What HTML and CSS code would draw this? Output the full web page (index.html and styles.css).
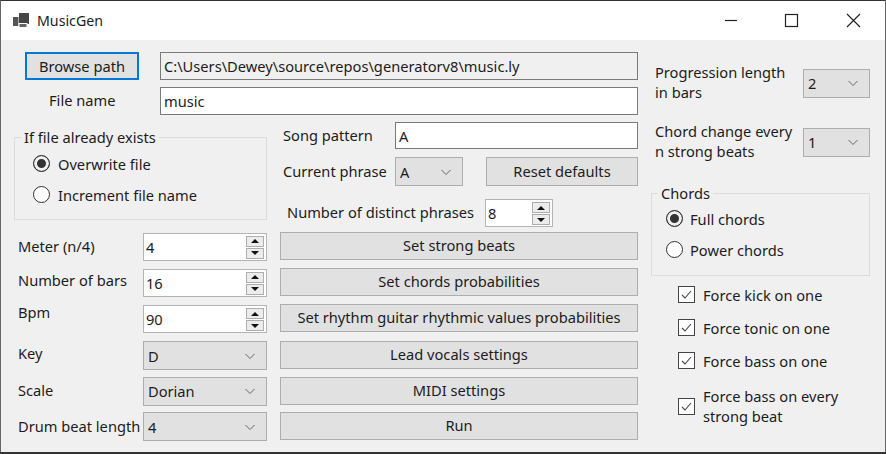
FILE: index.html
```html
<!DOCTYPE html>
<html lang="en">

<head>
    <meta charset="UTF-8">
    <title>MusicGen</title>
    <link rel="stylesheet" href="styles.css">
</head>

<body>
    <div class="window">
        <div class="titlebar">
            <svg class="app-icon" width="18" height="18" viewBox="0 0 18 18">
                <rect x="7" y="1" width="10" height="11" fill="#444"/>
                <rect x="1" y="5" width="5.5" height="9" fill="#555"/>
                <rect x="7" y="11.5" width="8" height="4" fill="#666" stroke="#fff" stroke-width="1"/>
            </svg>
            <span class="app-title">MusicGen</span>
            <div class="caption">
                <svg class="cap-btn" width="60" height="40" viewBox="0 0 60 40"><path d="M20 20.5H32" stroke="#222" stroke-width="1.2"/></svg>
                <svg class="cap-btn" width="60" height="40" viewBox="0 0 60 40"><rect x="20.5" y="14.5" width="12" height="12" fill="none" stroke="#222" stroke-width="1.2"/></svg>
                <svg class="cap-btn" width="60" height="40" viewBox="0 0 60 40"><path d="M22 14L35 27M35 14L22 27" stroke="#222" stroke-width="1.2"/></svg>
            </div>
        </div>

        <div class="content">
            <div class="main">
                <div class="path-row">
                    <div class="btn btn-browse">Browse path</div>
                    <div class="field field-readonly">C:\Users\Dewey\source\repos\generatorv8\music.ly</div>
                </div>
                <div class="path-row name-row">
                    <div class="label label-name">File name</div>
                    <div class="field">music</div>
                </div>

                <div class="upper">
                    <div class="group group-exists">
                        <div class="legend">If file already exists</div>
                        <div class="radio"><span class="radio-dot checked"></span>Overwrite file</div>
                        <div class="radio"><span class="radio-dot"></span>Increment file name</div>
                    </div>
                    <div class="phrase">
                        <div class="phrase-row">
                            <div class="label phrase-label">Song pattern</div>
                            <div class="field pattern-field">A</div>
                        </div>
                        <div class="phrase-row current-row">
                            <div class="label phrase-label">Current phrase</div>
                            <div class="select select-phrase">A
                                <svg class="chev" width="12" height="8" viewBox="0 0 12 8"><path d="M1.5 2L6 6.5L10.5 2" fill="none" stroke="#666" stroke-width="1"/></svg>
                            </div>
                            <div class="btn btn-reset">Reset defaults</div>
                        </div>
                        <div class="phrase-row distinct-row">
                            <div class="label distinct-label">Number of distinct phrases</div>
                            <div class="spin spin-small">8
                                <div class="spin-btns">
                                    <span class="arrow"><svg width="8" height="4" viewBox="0 0 8 4"><path d="M4 0L8 4H0Z" fill="#111"/></svg></span>
                                    <span class="arrow"><svg width="8" height="4" viewBox="0 0 8 4"><path d="M0 0H8L4 4Z" fill="#111"/></svg></span>
                                </div>
                            </div>
                        </div>
                    </div>
                </div>

                <div class="lower">
                    <div class="label">Meter (n/4)</div>
                    <div class="spin">4
                        <div class="spin-btns">
                            <span class="arrow"><svg width="8" height="4" viewBox="0 0 8 4"><path d="M4 0L8 4H0Z" fill="#111"/></svg></span>
                            <span class="arrow"><svg width="8" height="4" viewBox="0 0 8 4"><path d="M0 0H8L4 4Z" fill="#111"/></svg></span>
                        </div>
                    </div>
                    <div class="btn">Set strong beats</div>

                    <div class="label label-raised">Number of bars</div>
                    <div class="spin">16
                        <div class="spin-btns">
                            <span class="arrow"><svg width="8" height="4" viewBox="0 0 8 4"><path d="M4 0L8 4H0Z" fill="#111"/></svg></span>
                            <span class="arrow"><svg width="8" height="4" viewBox="0 0 8 4"><path d="M0 0H8L4 4Z" fill="#111"/></svg></span>
                        </div>
                    </div>
                    <div class="btn">Set chords probabilities</div>

                    <div class="label label-bpm">Bpm</div>
                    <div class="spin">90
                        <div class="spin-btns">
                            <span class="arrow"><svg width="8" height="4" viewBox="0 0 8 4"><path d="M4 0L8 4H0Z" fill="#111"/></svg></span>
                            <span class="arrow"><svg width="8" height="4" viewBox="0 0 8 4"><path d="M0 0H8L4 4Z" fill="#111"/></svg></span>
                        </div>
                    </div>
                    <div class="btn">Set rhythm guitar rhythmic values probabilities</div>

                    <div class="label label-raised">Key</div>
                    <div class="select">D
                        <svg class="chev" width="12" height="8" viewBox="0 0 12 8"><path d="M1.5 2L6 6.5L10.5 2" fill="none" stroke="#666" stroke-width="1"/></svg>
                    </div>
                    <div class="btn">Lead vocals settings</div>

                    <div class="label">Scale</div>
                    <div class="select">Dorian
                        <svg class="chev" width="12" height="8" viewBox="0 0 12 8"><path d="M1.5 2L6 6.5L10.5 2" fill="none" stroke="#666" stroke-width="1"/></svg>
                    </div>
                    <div class="btn">MIDI settings</div>

                    <div class="label">Drum beat length</div>
                    <div class="select">4
                        <svg class="chev" width="12" height="8" viewBox="0 0 12 8"><path d="M1.5 2L6 6.5L10.5 2" fill="none" stroke="#666" stroke-width="1"/></svg>
                    </div>
                    <div class="btn">Run</div>
                </div>
            </div>

            <div class="side">
                <div class="side-row">
                    <div class="label side-label">Progression length<br>in bars</div>
                    <div class="select select-side">2
                        <svg class="chev" width="12" height="8" viewBox="0 0 12 8"><path d="M1.5 2L6 6.5L10.5 2" fill="none" stroke="#666" stroke-width="1"/></svg>
                    </div>
                </div>
                <div class="side-row change-row">
                    <div class="label side-label">Chord change every<br>n strong beats</div>
                    <div class="select select-side">1
                        <svg class="chev" width="12" height="8" viewBox="0 0 12 8"><path d="M1.5 2L6 6.5L10.5 2" fill="none" stroke="#666" stroke-width="1"/></svg>
                    </div>
                </div>

                <div class="group group-chords">
                    <div class="legend">Chords</div>
                    <div class="radio"><span class="radio-dot checked"></span>Full chords</div>
                    <div class="radio"><span class="radio-dot"></span>Power chords</div>
                </div>

                <div class="checks">
                    <div class="check"><svg class="box" width="17" height="17" viewBox="0 0 17 17"><rect x="0.5" y="0.5" width="16" height="16" fill="#fff" stroke="#444"/><path d="M4 9L7 12L13 5" fill="none" stroke="#444" stroke-width="1.1"/></svg>Force kick on one</div>
                    <div class="check"><svg class="box" width="17" height="17" viewBox="0 0 17 17"><rect x="0.5" y="0.5" width="16" height="16" fill="#fff" stroke="#444"/><path d="M4 9L7 12L13 5" fill="none" stroke="#444" stroke-width="1.1"/></svg>Force tonic on one</div>
                    <div class="check"><svg class="box" width="17" height="17" viewBox="0 0 17 17"><rect x="0.5" y="0.5" width="16" height="16" fill="#fff" stroke="#444"/><path d="M4 9L7 12L13 5" fill="none" stroke="#444" stroke-width="1.1"/></svg>Force bass on one</div>
                    <div class="check check-tall"><svg class="box" width="17" height="17" viewBox="0 0 17 17"><rect x="0.5" y="0.5" width="16" height="16" fill="#fff" stroke="#444"/><path d="M4 9L7 12L13 5" fill="none" stroke="#444" stroke-width="1.1"/></svg><span>Force bass on every<br>strong beat</span></div>
                </div>
            </div>
        </div>
    </div>
</body>

</html>
```
FILE: styles.css
```css
html,
body {
    margin: 0;
    padding: 0;
    overflow: hidden;
}

body {
    font-family: "Noto Sans", "Open Sans", sans-serif;
    font-size: 14.65px;
    color: #1c1c1c;
    background-color: #333;
}

.window {
    box-sizing: border-box;
    width: 886px;
    height: 452px;
    border-top: 1px solid #333;
    border-left: 1px solid #666;
    border-right: 1px solid #666;
    background-color: #f0f0f0;
}

.titlebar {
    display: flex;
    align-items: center;
    height: 39px;
    background-color: #fff;
}

.app-icon {
    margin-left: 11px;
}

.app-title {
    margin-left: 7px;
    font-size: 14.2px;
}

.caption {
    display: flex;
    margin-left: auto;
    margin-right: 0;
}

.cap-btn {
    display: block;
    margin-top: -1px;
}

.content {
    display: flex;
    padding-top: 12px;
    padding-left: 13px;
}

.main {
    width: 624px;
}

.path-row {
    display: flex;
    align-items: center;
    height: 28px;
}

.name-row {
    margin-top: 7px;
}

.label {
    padding-bottom: 2px;
    white-space: nowrap;
    line-height: 20px;
}

.label-name {
    width: 146px;
    padding-left: 35px;
    box-sizing: border-box;
}

.btn {
    display: flex;
    align-items: center;
    justify-content: center;
    box-sizing: border-box;
    height: 28px;
    padding-bottom: 2px;
    background-color: #e1e1e1;
    border: 1px solid #adadad;
    white-space: nowrap;
}

.btn-browse {
    width: 114px;
    margin-left: 11px;
    margin-right: 21px;
    padding-bottom: 0;
    border: 2px solid #0078d7;
}

.field {
    display: flex;
    align-items: center;
    box-sizing: border-box;
    flex: 1;
    height: 28px;
    padding-left: 3px;
    background-color: #fff;
    border: 1px solid #7a7a7a;
}

.field-readonly {
    background-color: #f0f0f0;
}

.upper {
    display: flex;
    margin-top: 7px;
}

.group {
    position: relative;
    box-sizing: border-box;
    border: 1px solid #dcdcdc;
}

.legend {
    position: absolute;
    top: -11px;
    left: 6px;
    padding: 0 3px;
    line-height: 20px;
    background-color: #f0f0f0;
}

.group-exists {
    width: 253px;
    height: 83px;
    margin-top: 15px;
    padding-top: 10px;
    padding-left: 18px;
}

.radio {
    display: flex;
    align-items: center;
    height: 31px;
}

.radio-dot {
    box-sizing: border-box;
    width: 17px;
    height: 17px;
    margin-right: 8px;
    border: 1px solid #333;
    border-radius: 50%;
    background-color: #fff;
}

.radio-dot.checked {
    background-color: #333;
    box-shadow: inset 0 0 0 3px #f0f0f0;
}

.phrase {
    width: 358px;
    margin-left: 13px;
}

.phrase-row {
    display: flex;
    align-items: center;
}

.phrase-label {
    width: 115px;
    padding-left: 3px;
    box-sizing: border-box;
}

.pattern-field {
    height: 27px;
}

.current-row {
    margin-top: 8px;
}

.distinct-row {
    margin-top: 13px;
}

.distinct-label {
    width: 205px;
    padding-left: 7px;
    box-sizing: border-box;
}

.select {
    display: flex;
    align-items: center;
    justify-content: space-between;
    box-sizing: border-box;
    height: 29px;
    padding: 0 10px 0 4px;
    background-color: #e1e1e1;
    border: 1px solid #adadad;
}

.select-phrase {
    width: 68px;
}

.btn-reset {
    width: 152px;
    height: 29px;
    margin-left: 23px;
}

.spin {
    display: flex;
    align-items: center;
    justify-content: space-between;
    box-sizing: border-box;
    height: 28px;
    padding-left: 2px;
    background-color: #fff;
    border: 1px solid #b4b4b4;
}

.spin-small {
    width: 68px;
}

.spin-btns {
    display: flex;
    flex-direction: column;
    gap: 1px;
    padding: 1px 2px 0 0;
}

.arrow {
    display: flex;
    align-items: center;
    justify-content: center;
    box-sizing: border-box;
    width: 18px;
    height: 11px;
    background-color: #ececec;
    border: 1px solid #adadad;
}

.lower {
    display: grid;
    grid-template-columns: 129px 124px 371px;
    grid-template-rows: 29px 29px 30px 29px 28px 29px;
    row-gap: 7px;
    align-items: center;
    margin-top: 5px;
}

.lower .label {
    padding-left: 4px;
}

.lower .btn {
    align-self: start;
    margin-left: 13px;
}

.label-raised {
    margin-bottom: 4px;
}

.label-bpm {
    margin-bottom: 13px;
}

.side {
    width: 219px;
    margin-left: 13px;
}

.side-row {
    display: flex;
    align-items: center;
    justify-content: space-between;
    margin-top: 10px;
}

.change-row {
    margin-top: 17px;
}

.side-label {
    padding-left: 4px;
}

.select-side {
    width: 67px;
}

.group-chords {
    height: 83px;
    margin-top: 30px;
    padding-top: 9px;
    padding-left: 14px;
}

.group-chords .radio-dot {
    margin-right: 7px;
}

.checks {
    margin-top: 2px;
    padding-left: 27px;
}

.check {
    display: flex;
    align-items: center;
    height: 33px;
}

.box {
    flex-shrink: 0;
    margin-right: 8px;
}

.check-tall {
    height: 50px;
    margin-top: 4px;
    line-height: 20px;
}
```
